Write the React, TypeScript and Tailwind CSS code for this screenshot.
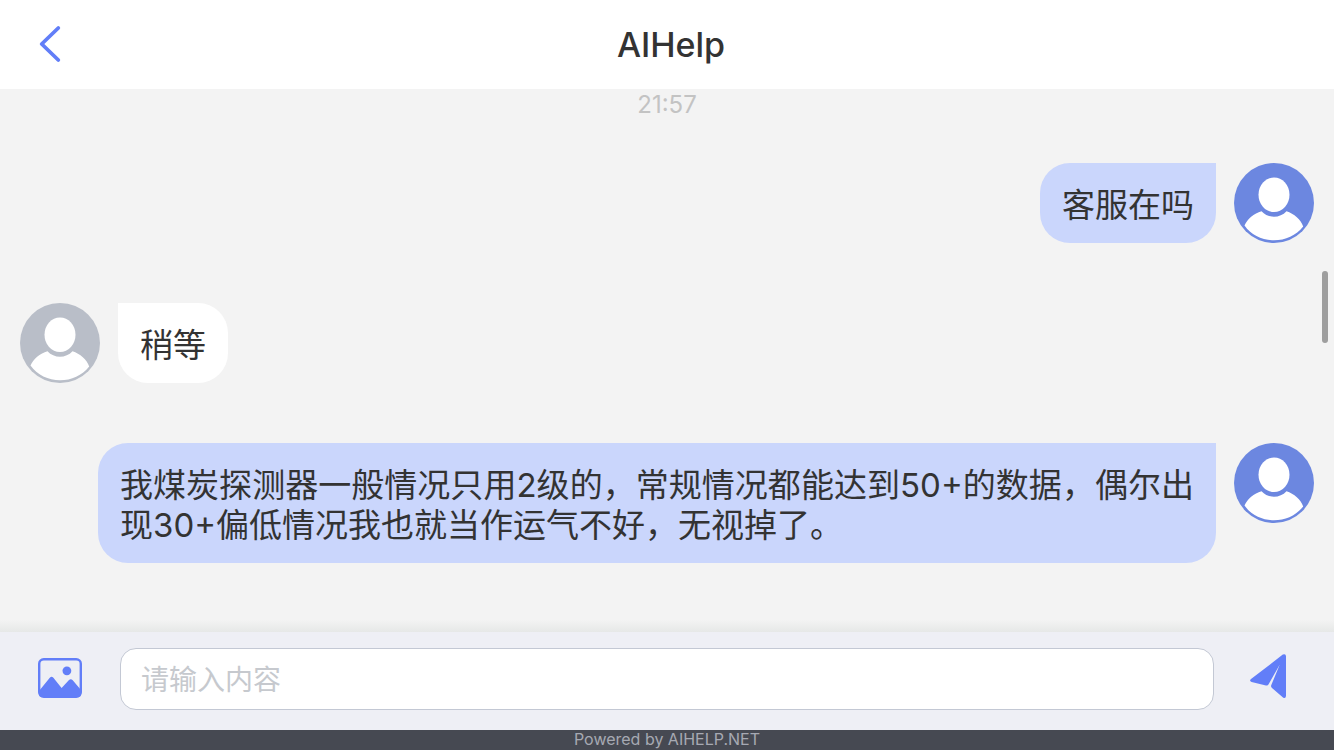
import { FormEvent, useState } from 'react';

interface Message {
  id: number;
  from: 'user' | 'agent';
  text: string;
}

const messages: Message[] = [
  { id: 1, from: 'user', text: '客服在吗' },
  { id: 2, from: 'agent', text: '稍等' },
  {
    id: 3,
    from: 'user',
    text: '我煤炭探测器一般情况只用2级的，常规情况都能达到50+的数据，偶尔出现30+偏低情况我也就当作运气不好，无视掉了。',
  },
];

function Avatar({ color }: { color: string }) {
  return (
    <svg viewBox="0 0 80 80" className="size-20 shrink-0" aria-hidden="true">
      <circle cx="40" cy="40" r="40" fill={color} />
      <ellipse cx="40" cy="31.8" rx="15.5" ry="17.3" fill="#fff" />
      <path
        d="M27.5 48.2C34 55.5 46 55.5 52.5 48.2C60 50.5 67 56.5 69.2 63.5C62 72.5 51.5 77.3 40 77.3C28.5 77.3 17 72 10.5 62.5C13 56 20 50.5 27.5 48.2Z"
        fill="#fff"
      />
    </svg>
  );
}

function MessageRow({ message }: { message: Message }) {
  const isUser = message.from === 'user';

  return (
    <li className={`flex items-start gap-[18px] ${isUser ? 'flex-row-reverse pl-[78px]' : 'pr-[78px]'}`}>
      <Avatar color={isUser ? '#6c87e0' : '#b9bec8'} />
      <p
        className={`rounded-[30px] px-[22px] pt-[22px] pb-[18px] text-justify text-[33px] leading-10 text-[#333] ${
          isUser ? 'rounded-tr-none bg-[#cad6fc]' : 'rounded-tl-none bg-white'
        }`}
      >
        {message.text}
      </p>
    </li>
  );
}

export default function App() {
  const [draft, setDraft] = useState('');

  const handleSubmit = (e: FormEvent) => {
    e.preventDefault();
    setDraft('');
  };

  return (
    <div className="flex h-screen flex-col bg-[#f3f3f3] font-['Inter','Noto_Sans_CJK_SC',sans-serif]">
      <header className="grid h-[89px] shrink-0 grid-cols-[1fr_auto_1fr] items-center bg-white px-[38px]">
        <button type="button" aria-label="返回" className="w-6">
          <svg viewBox="0 0 24 40" className="h-10 w-6" fill="none" aria-hidden="true">
            <path
              d="M20.3 3L3.7 19L20.3 35"
              stroke="#627ef8"
              strokeWidth="3.8"
              strokeLinecap="round"
              strokeLinejoin="round"
            />
          </svg>
        </button>
        <h1 className="pl-2 text-[34px] font-medium text-[#333]">AIHelp</h1>
      </header>

      <main className="relative min-h-0 flex-1 overflow-hidden">
        <div className="px-5">
          <time className="block text-center text-2xl leading-8 text-[#c3c3c3]">21:57</time>
          <ul className="mt-[42px] flex flex-col gap-[60px]">
            {messages.map((message) => (
              <MessageRow key={message.id} message={message} />
            ))}
          </ul>
        </div>
        <div className="absolute top-[182px] right-1.5 h-[72px] w-1.5 rounded-full bg-[#9e9e9e]" />
        <div className="absolute inset-x-0 bottom-0 h-3 bg-linear-to-b from-[#f3f3f3] to-[#e6e8e7]" />
      </main>

      <form onSubmit={handleSubmit} className="flex shrink-0 items-center bg-[#eeeff5] pt-4 pb-5">
        <button type="button" aria-label="图片" className="flex w-[120px] shrink-0 justify-center pb-0.5">
          <svg viewBox="0 0 44 40" className="h-10 w-11" aria-hidden="true">
            <rect x="1.2" y="1.2" width="41.6" height="37.6" rx="4.5" fill="none" stroke="#627ef8" strokeWidth="2.4" />
            <circle cx="28.9" cy="12.8" r="4.4" fill="#627ef8" />
            <path
              d="M1 33L11.8 19.8Q13.6 17.6 15.4 19.8L23.6 30L31 22.1Q32.8 20.2 34.5 22.1L43 32V36Q43 39 40 39H4Q1 39 1 36Z"
              fill="#627ef8"
            />
          </svg>
        </button>
        <input
          type="text"
          aria-label="请输入内容"
          placeholder="请输入内容"
          value={draft}
          onChange={(e) => setDraft(e.target.value)}
          className="h-[62px] min-w-0 flex-1 rounded-[16px] border border-[#c3c8d4] bg-white px-5 pt-0.5 text-[28px] text-[#333] outline-none placeholder:text-[#c6c9ce]"
        />
        <button type="submit" aria-label="发送" className="flex w-[120px] shrink-0 justify-center pr-3 pb-1.5">
          <svg viewBox="0 0 36 44" className="h-11 w-9" fill="#627ef8" aria-hidden="true">
            <path d="M0.7 25.2L32.8 0.6Q35.8-0.8 36 2.2V42Q35.6 45 33 43.4L22 34Q20.6 32.8 21.2 31.2L29.8 10.6L18.6 30.3Q17.8 31.8 16 31.4L1.6 28.1Q-0.9 27 0.7 25.2Z" />
          </svg>
        </button>
      </form>

      <footer className="shrink-0 bg-[#464952] pb-0.5 text-center text-base leading-[18px] text-[#a6a9b3]">
        Powered by AIHELP.NET
      </footer>
    </div>
  );
}
